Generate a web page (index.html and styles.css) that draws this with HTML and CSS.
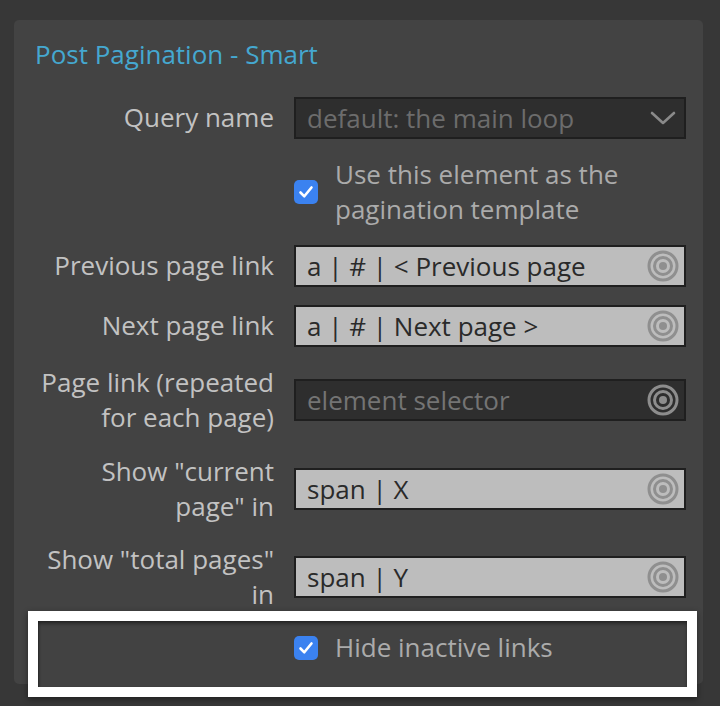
FILE: index.html
```html
<!DOCTYPE html>
<html>
<head>
<meta charset="utf-8">
<link rel="stylesheet" href="styles.css">
</head>
<body>
<div class="panel">
  <h2 class="title">Post Pagination - Smart</h2>
  <div class="form">
    <div class="row">
      <div class="label">Query name</div>
      <div class="select">
        <span>default: the main loop</span>
        <svg class="chev" width="26" height="16" viewBox="0 0 26 16"><path d="M2 3 L13 13 L24 3" fill="none" stroke="#8a8a8a" stroke-width="2.6" stroke-linecap="round" stroke-linejoin="round"/></svg>
      </div>
    </div>
    <div class="row">
      <div class="label"></div>
      <label class="check">
        <span class="box"><svg width="24" height="24" viewBox="0 0 24 24"><path d="M6.5 12.5 L10.3 16.3 L17.5 7.5" fill="none" stroke="#fff" stroke-width="2.6" stroke-linecap="round" stroke-linejoin="round"/></svg></span>
        <span class="check-text">Use this element as the pagination template</span>
      </label>
    </div>
    <div class="row">
      <div class="label">Previous page link</div>
      <div class="input"><span>a | # | &lt; Previous page</span><svg class="target" width="32" height="32" viewBox="0 0 32 32"><circle cx="16" cy="16" r="14" fill="none" stroke="#8f8f8f" stroke-width="3"/><circle cx="16" cy="16" r="8.5" fill="none" stroke="#8f8f8f" stroke-width="3"/><circle cx="16" cy="16" r="4" fill="#8f8f8f"/></svg></div>
    </div>
    <div class="row">
      <div class="label">Next page link</div>
      <div class="input"><span>a | # | Next page &gt;</span><svg class="target" width="32" height="32" viewBox="0 0 32 32"><circle cx="16" cy="16" r="14" fill="none" stroke="#8f8f8f" stroke-width="3"/><circle cx="16" cy="16" r="8.5" fill="none" stroke="#8f8f8f" stroke-width="3"/><circle cx="16" cy="16" r="4" fill="#8f8f8f"/></svg></div>
    </div>
    <div class="row">
      <div class="label">Page link (repeated for each page)</div>
      <div class="input dark"><span>element selector</span><svg class="target" width="32" height="32" viewBox="0 0 32 32"><circle cx="16" cy="16" r="14" fill="none" stroke="#8d8d8d" stroke-width="3"/><circle cx="16" cy="16" r="8.5" fill="none" stroke="#8d8d8d" stroke-width="3"/><circle cx="16" cy="16" r="4" fill="#8d8d8d"/></svg></div>
    </div>
    <div class="row">
      <div class="label">Show "current page" in</div>
      <div class="input"><span>span | X</span><svg class="target" width="32" height="32" viewBox="0 0 32 32"><circle cx="16" cy="16" r="14" fill="none" stroke="#8f8f8f" stroke-width="3"/><circle cx="16" cy="16" r="8.5" fill="none" stroke="#8f8f8f" stroke-width="3"/><circle cx="16" cy="16" r="4" fill="#8f8f8f"/></svg></div>
    </div>
    <div class="row">
      <div class="label">Show "total pages" in</div>
      <div class="input"><span>span | Y</span><svg class="target" width="32" height="32" viewBox="0 0 32 32"><circle cx="16" cy="16" r="14" fill="none" stroke="#8f8f8f" stroke-width="3"/><circle cx="16" cy="16" r="8.5" fill="none" stroke="#8f8f8f" stroke-width="3"/><circle cx="16" cy="16" r="4" fill="#8f8f8f"/></svg></div>
    </div>
  </div>
  <div class="highlight">
    <div class="hl-inner">
      <label class="check single">
        <span class="box"><svg width="24" height="24" viewBox="0 0 24 24"><path d="M6.5 12.5 L10.3 16.3 L17.5 7.5" fill="none" stroke="#fff" stroke-width="2.6" stroke-linecap="round" stroke-linejoin="round"/></svg></span>
        <span class="check-text">Hide inactive links</span>
      </label>
    </div>
  </div>
</div>
</body>
</html>
```

FILE: styles.css
```css
* { box-sizing: border-box; }
html, body { margin: 0; padding: 0; }
body {
  background: #373737;
  font-family: "Open Sans", "Noto Sans", sans-serif;
  font-size: 26px;
  width: 720px;
  height: 706px;
  overflow: hidden;
  padding: 20px 17px 0 14px;
}
.panel {
  background: #434343;
  border-radius: 5px;
  padding: 16px 17px 0 21px;
  height: 664px;
}
.title {
  margin: 0;
  font-weight: 400;
  font-size: 26px;
  line-height: 36px;
  color: #45a8d0;
}
.form {
  margin-top: 25px;
  display: flex;
  flex-direction: column;
  gap: 18px;
}
.row {
  display: grid;
  grid-template-columns: 239px 392px;
  column-gap: 20px;
  align-items: center;
}
.label {
  text-align: right;
  color: #c2c2c2;
  line-height: 35.25px;
}
.select, .input {
  height: 42px;
  border: 2px solid #1f1f1f;
  display: flex;
  align-items: center;
  justify-content: space-between;
  padding: 0 5px 0 11px;
  line-height: 34px;
}
.select {
  background: #2e2e2e;
  color: #6c6c6c;
  padding-right: 8px;
}
.input {
  background: #bdbdbd;
  color: #2a2a2a;
}
.input.dark {
  background: #2e2e2e;
  color: #747474;
}
.target { flex: none; }
.check {
  display: flex;
  align-items: center;
  gap: 17px;
}
.box {
  flex: none;
  width: 24px;
  height: 24px;
  border-radius: 5px;
  background: #3b82f0;
  display: flex;
}
.check-text {
  color: #ababab;
  line-height: 35px;
  width: 320px;
}
.highlight {
  margin: -2px -11px 0 -7px;
  border: 10px solid #ffffff;
  box-shadow: 0 2px 6px rgba(0,0,0,0.45);
  position: relative;
}
.hl-inner {
  height: 66px;
  background: #424242;
  box-shadow: inset 0 3px 4px -1px rgba(0,0,0,0.55), inset 2px 0 2px -1px rgba(0,0,0,0.3);
  display: flex;
  align-items: center;
  padding-left: 256px;
  padding-bottom: 12px;
}
.single .check-text { width: auto; }
```
